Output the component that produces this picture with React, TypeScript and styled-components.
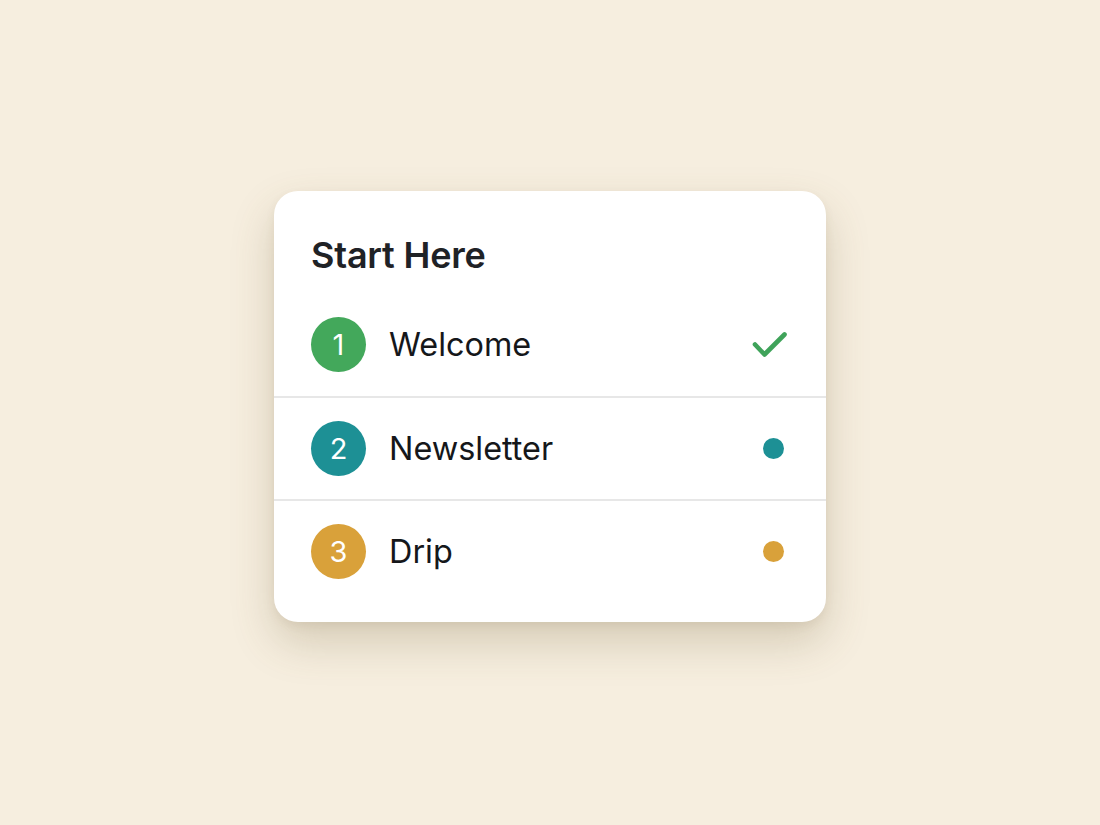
import React from "react";
import styled, { createGlobalStyle } from "styled-components";

const GlobalStyle = createGlobalStyle`
    html, body {
        margin: 0;
        padding: 0;
        background-color: #f6eedf;
        font-family: Inter, "Noto Sans", "Liberation Sans", sans-serif;
    }
`

const Page = styled.div`
    width: 1100px;
    height: 825px;
    display: flex;
    justify-content: center;
    align-items: flex-start;
    padding-top: 191px;
    box-sizing: border-box;
`

const Card = styled.div`
    width: 552px;
    height: 431px;
    box-sizing: border-box;
    background-color: #fff;
    border-radius: 24px;
    box-shadow: 0 20px 44px rgba(110, 90, 50, 0.24), 0 4px 10px rgba(110, 90, 50, 0.08);
    display: flex;
    flex-direction: column;
    overflow: hidden;
`

const Title = styled.h2`
    margin: 0;
    height: 102px;
    padding: 0 37px;
    box-sizing: border-box;
    display: flex;
    align-items: center;
    padding-top: 26px;
    font-size: 36px;
    font-weight: 600;
    color: #1f2226;
    letter-spacing: -0.2px;
`

const Row = styled.div<{ $divider?: boolean }>`
    height: 103px;
    box-sizing: border-box;
    padding: 0 39px 0 37px;
    display: flex;
    align-items: center;
    border-top: ${(p) => (p.$divider ? "2px solid #e7e7e7" : "none")};
`

const Badge = styled.div<{ $color: string }>`
    width: 55px;
    height: 55px;
    border-radius: 50%;
    background-color: ${(p) => p.$color};
    color: #fff;
    font-size: 29px;
    font-weight: 400;
    display: flex;
    justify-content: center;
    align-items: center;
    flex-shrink: 0;
`

const Label = styled.span`
    margin-left: 23px;
    flex: 1;
    font-size: 32.4px;
    font-weight: 400;
    color: #15171a;
`

const Dot = styled.span<{ $color: string }>`
    width: 21px;
    height: 21px;
    border-radius: 50%;
    background-color: ${(p) => p.$color};
    margin-right: 3px;
`

const Check = () => (
    <svg width="36" height="28" viewBox="0 0 36 28" fill="none">
        <path d="M4 13.5 L13.5 23.5 L33.5 3.5" stroke="#3fa35a" strokeWidth="4.6" strokeLinecap="round" strokeLinejoin="round" />
    </svg>
)

const steps = [
    { n: 1, label: "Welcome", color: "#43a85b", done: true },
    { n: 2, label: "Newsletter", color: "#1d9095", done: false },
    { n: 3, label: "Drip", color: "#d9a13a", done: false },
]

function App(): JSX.Element {
    return (
        <Page>
            <GlobalStyle />
            <Card>
                <Title>Start Here</Title>
                {steps.map((s, i) => (
                    <Row key={s.n} $divider={i > 0}>
                        <Badge $color={s.color}>{s.n}</Badge>
                        <Label>{s.label}</Label>
                        {s.done ? <Check /> : <Dot $color={s.color} />}
                    </Row>
                ))}
            </Card>
        </Page>
    )
}

export default App;
